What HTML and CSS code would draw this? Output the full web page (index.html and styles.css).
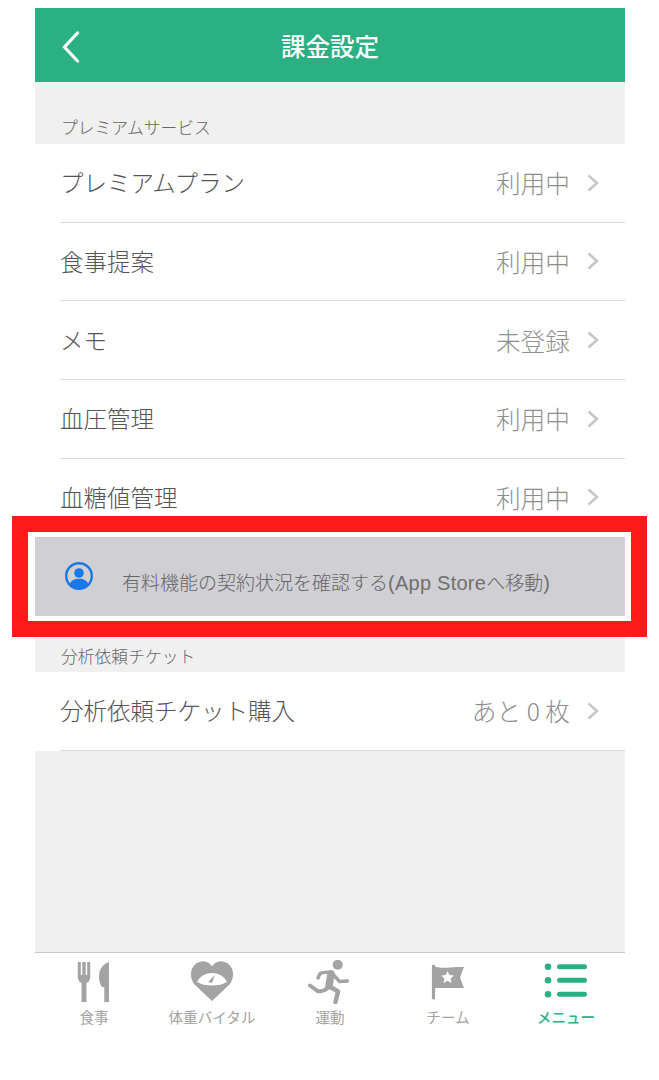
FILE: index.html
```html
<!DOCTYPE html>
<html lang="ja">
<head>
<meta charset="utf-8">
<title>課金設定</title>
<link rel="stylesheet" href="styles.css">
</head>
<body>
<div class="phone">
  <header class="nav">
    <svg class="back" viewBox="0 0 18 32"><path d="M15.500 2 2.500 16l13 14" fill="none" stroke="#fff" stroke-width="3.200" stroke-linecap="round"/></svg>
    <h1>課金設定</h1>
  </header>
  <div class="section first">プレミアムサービス</div>
  <ul class="list">
    <li><span>プレミアムプラン</span><span class="val">利用中</span><svg class="chev" viewBox="0 0 12 18"><path d="M1.500 1.500l8.500 7.500-8.500 7.500"/></svg></li>
    <li><span>食事提案</span><span class="val">利用中</span><svg class="chev" viewBox="0 0 12 18"><path d="M1.500 1.500l8.500 7.500-8.500 7.500"/></svg></li>
    <li><span>メモ</span><span class="val">未登録</span><svg class="chev" viewBox="0 0 12 18"><path d="M1.500 1.500l8.500 7.500-8.500 7.500"/></svg></li>
    <li><span>血圧管理</span><span class="val">利用中</span><svg class="chev" viewBox="0 0 12 18"><path d="M1.500 1.500l8.500 7.500-8.500 7.500"/></svg></li>
    <li class="cut"><span>血糖値管理</span><span class="val">利用中</span><svg class="chev" viewBox="0 0 12 18"><path d="M1.500 1.500l8.500 7.500-8.500 7.500"/></svg></li>
  </ul>
  <div class="callout">
    <div class="callout-in">
      <svg class="person" viewBox="0 0 30 30"><circle cx="15" cy="15" r="12.800" fill="none" stroke="#1a78e8" stroke-width="2.400"/><circle cx="15" cy="12" r="4.800" fill="#1a78e8"/><path d="M5.500 23c2-4 5.400-5.300 9.500-5.300s7.500 1.300 9.500 5.300c-2.400 2.900-5.700 4.600-9.500 4.600S7.900 25.900 5.500 23z" fill="#1a78e8"/></svg>
      <span class="callout-text">有料機能の契約状況を確認する<span class="latin">(App Store</span>へ移動<span class="latin">)</span></span>
    </div>
  </div>
  <div class="section second">分析依頼チケット</div>
  <ul class="list">
    <li><span>分析依頼チケット購入</span><span class="val">あと 0 枚</span><svg class="chev" viewBox="0 0 12 18"><path d="M1.500 1.500l8.500 7.500-8.500 7.500"/></svg></li>
  </ul>
  <div class="fill"></div>
  <nav class="tabs">
    <div class="tab">
      <svg viewBox="0 0 44 44"><path d="M5.800 2h3v13h1.500V2h3.400v13h1.500V2h3v15c0 3-1.300 5-3.700 6v19h-5V23C7.100 22 5.800 20 5.800 17z" fill="#a3a3a3"/><path d="M37 2v40h-4.700V27h-2.500c-2.500-4-3.300-9-2.500-14 .8-5 4.700-9.500 9.700-11z" fill="#a3a3a3"/></svg>
      <span>食事</span>
    </div>
    <div class="tab">
      <svg viewBox="0 0 44 44"><path d="M22 41 4 24C-2 15 1 4 11 1.500c5-1 9 1.500 11 5 2-3.500 6-6 11-5 10 2.500 13 13.500 7 22.500z" fill="#a3a3a3"/><path d="M7 22c3-6 9-9 15-9s12 3 15 9c-4 2.500-9 3.500-15 3.500S11 24.500 7 22z" fill="#fff"/><path d="M18 22l7-7-3 8z" fill="#a3a3a3"/></svg>
      <span>体重バイタル</span>
    </div>
    <div class="tab">
      <svg viewBox="0 0 44 44"><circle cx="29.700" cy="4.800" r="5" fill="#a3a3a3"/><path d="M10 18l2-4.500c4-1.500 8-1.500 11-1.500l8.500 9.500 8-.5" fill="none" stroke="#a3a3a3" stroke-width="3.400" stroke-linecap="round" stroke-linejoin="round"/><path d="M23 14l-2 12" fill="none" stroke="#a3a3a3" stroke-width="7.500" stroke-linecap="round"/><path d="M21 26l9 5.500-2.500 10.500" fill="none" stroke="#a3a3a3" stroke-width="4.500" stroke-linecap="round" stroke-linejoin="round"/><path d="M20 27c-1.500 3-7 5-10.500 4L2 25.500" fill="none" stroke="#a3a3a3" stroke-width="4" stroke-linecap="round" stroke-linejoin="round"/></svg>
      <span>運動</span>
    </div>
    <div class="tab">
      <svg viewBox="0 0 44 44"><path d="M7.500 6v32" stroke="#a3a3a3" stroke-width="3.200" stroke-linecap="round"/><path d="M8 6.500c6 1.500 11 1.500 16 1 5-.5 9-.5 14-.5l-4 10.500 4 10.500H8z" fill="#a3a3a3"/><path d="M21.500 11l1.900 4.100 4.500.5-3.300 3 .9 4.400-4-2.300-4 2.300.9-4.400-3.300-3 4.500-.5z" fill="#fff"/></svg>
      <span>チーム</span>
    </div>
    <div class="tab on">
      <svg viewBox="0 0 44 44"><g fill="#2bb083"><circle cx="4" cy="6.700" r="3.300"/><circle cx="4" cy="20.300" r="3.300"/><circle cx="4" cy="34.300" r="3.300"/><rect x="13" y="4.200" width="30" height="5" rx="2.500"/><rect x="13" y="17.800" width="30" height="5" rx="2.500"/><rect x="13" y="31.800" width="30" height="5" rx="2.500"/></g></svg>
      <span>メニュー</span>
    </div>
  </nav>
</div>
</body>
</html>
```
FILE: styles.css
```css
* { box-sizing: border-box; }
html, body { margin: 0; padding: 0; background: #fff; }
body { font-family: "Noto Sans CJK JP", "Noto Sans", sans-serif; width: 659px; height: 1080px; overflow: hidden; }
.phone { margin: 8px 34px 0 35px; width: 590px; position: relative; }
.nav { height: 74px; background: #2bb083; display: flex; align-items: center; justify-content: center; position: relative; }
.nav h1 { margin: 2px 0 0; color: #fff; font-size: 24.500px; font-weight: 500; line-height: 1; }
.back { position: absolute; left: 27px; top: 23px; width: 18px; height: 32px; }
.section { background: #f0f0f0; color: #666; font-size: 16.800px; padding-left: 26px; line-height: 20px; font-weight: 300; }
.section.first { height: 62px; padding-top: 35px; }
.section.second { height: 35px; padding-top: 9px; }
.list { list-style: none; margin: 0; padding: 0 0 0 25px; background: #fff; }
.list li { height: 78.670px; display: flex; align-items: center; border-bottom: 1px solid #d9d9d9; font-size: 23.500px; font-weight: 300; color: #555; padding: 0 26px 1px 0; }
.list li.cut { height: 57.330px; border-bottom: 0; padding-top: 20px; padding-bottom: 1px; }
.second + .list li { height: 79px; }
.val { margin-left: auto; color: #8f8f8f; font-size: 24.700px; }
.chev { width: 12px; height: 18px; margin: 1px 0 0 17px; fill: none; stroke: #c6c6c6; stroke-width: 2.600; flex: none; }
.callout { margin: 0 -23px; width: 635px; height: 121px; background: #fff; border: 16px solid #ff1a1a; padding: 5px 0; position: relative; z-index: 1; }
.callout-in { background: #cfcfd4; height: 79px; margin-left: 7px; width: 590px; display: flex; align-items: flex-start; color: #666; font-size: 19px; font-weight: 300; white-space: nowrap; }
.callout-text { margin: 32px 0 0 28px; line-height: 26px; }
.latin { font-family: "Liberation Sans", sans-serif; font-size: 20px; font-weight: 400; letter-spacing: .25px; color: #707070; }
.person { width: 30px; height: 30px; margin: 24px 0 0 29px; flex: none; }
.fill { height: 202px; background: #f0f0f0; border-bottom: 1px solid #c8c8c8; }
.tabs { display: grid; grid-template-columns: repeat(5, 118px); padding-top: 7px; }
.tab { display: flex; flex-direction: column; align-items: center; color: #a3a3a3; font-size: 14.600px; line-height: 18px; }
.tab svg { width: 44px; height: 44px; margin-bottom: 4px; }
.tab.on { color: #2bb083; font-weight: 500; }
```
